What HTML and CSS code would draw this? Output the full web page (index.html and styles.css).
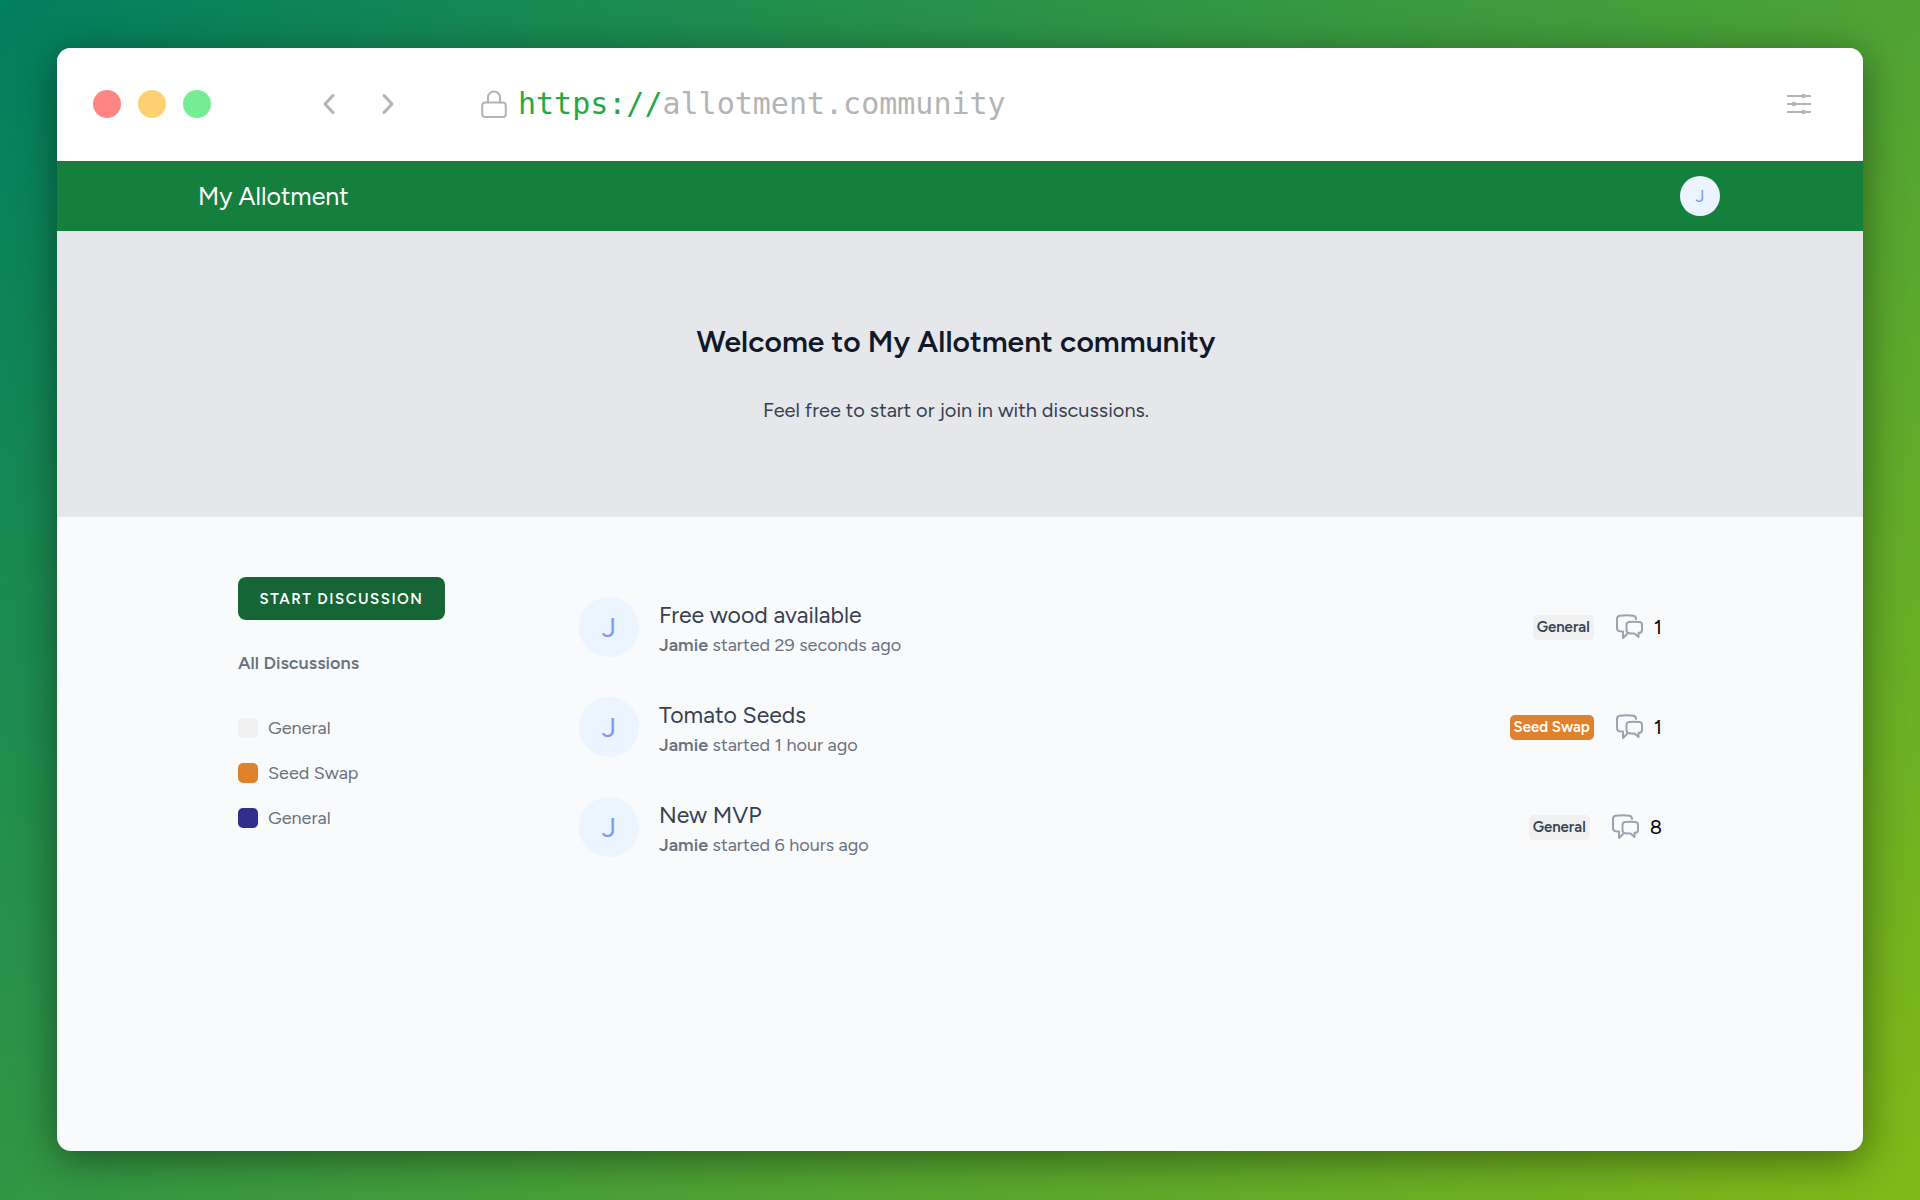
FILE: index.html
```html
<!DOCTYPE html>
<html lang="en">
<head>
<meta charset="utf-8">
<meta name="viewport" content="width=device-width, initial-scale=1">
<title>My Allotment</title>
<link rel="stylesheet" href="styles.css">
</head>
<body>
<svg class="defs" aria-hidden="true">
  <symbol id="chat" viewBox="0 0 27 26">
    <path d="M20 5Q20 2.200 17.500 1.700Q10.500 .6 3.500 1.700Q1 2.200 1 5V14Q1 16.800 3.500 17.200L7 17.600V24L11 20"/>
    <path d="M10.500 11Q10.500 8.300 13 8Q18 7.400 23.500 8Q26 8.300 26 11V16Q26 18.500 23.500 18.800H22.500V23L18.500 19.500Q15 19.500 13 19.200Q10.500 18.800 10.500 16Z"/>
  </symbol>
</svg>
<div class="window">
  <div class="toolbar">
    <div class="lights"><span class="light close"></span><span class="light minimise"></span><span class="light expand"></span></div>
    <div class="history">
      <button class="icon-button" aria-label="Back"><svg width="14" height="22" viewBox="0 0 14 22"><path d="M11 2.500L3 11l8 8.500"/></svg></button>
      <button class="icon-button" aria-label="Forward"><svg width="14" height="22" viewBox="0 0 14 22"><path d="M3 2.500L11 11l-8 8.500"/></svg></button>
    </div>
    <div class="address">
      <svg class="lock" width="26" height="28" viewBox="0 0 26 28"><rect x="1.200" y="12.500" width="23.600" height="14.500" rx="3"/><path d="M7 12.500V7.500a6 6 0 0 1 12 0v5"/></svg>
      <span class="url"><span class="scheme">https://</span>allotment.community</span>
    </div>
    <button class="icon-button" aria-label="Settings"><svg class="sliders" width="24" height="22" viewBox="0 0 24 22"><path d="M0 3h24M0 11h24M0 19h24"/><circle cx="16.500" cy="3" r="2.300"/><circle cx="7" cy="11" r="2.300"/><circle cx="16.500" cy="19" r="2.300"/></svg></button>
  </div>
  <header class="nav">
    <a class="brand" href="#">My Allotment</a>
    <button class="avatar avatar-small" aria-label="Jamie's account">J</button>
  </header>
  <section class="hero">
    <h1>Welcome to My Allotment community</h1>
    <p>Feel free to start or join in with discussions.</p>
  </section>
  <main class="content">
    <aside class="sidebar">
      <button class="start">START DISCUSSION</button>
      <a class="all" href="#">All Discussions</a>
      <nav class="topics">
        <a class="topic" href="#"><span class="swatch grey"></span>General</a>
        <a class="topic" href="#"><span class="swatch orange"></span>Seed Swap</a>
        <a class="topic" href="#"><span class="swatch indigo"></span>General</a>
      </nav>
    </aside>
    <div class="discussions">
      <article class="discussion">
        <span class="avatar">J</span>
        <div class="summary"><a class="title" href="#">Free wood available</a><p><b>Jamie</b> started 29 seconds ago</p></div>
        <span class="tag grey">General</span>
        <span class="replies"><svg width="27" height="26"><use href="#chat"/></svg>1</span>
      </article>
      <article class="discussion">
        <span class="avatar">J</span>
        <div class="summary"><a class="title" href="#">Tomato Seeds</a><p><b>Jamie</b> started 1 hour ago</p></div>
        <span class="tag orange">Seed Swap</span>
        <span class="replies"><svg width="27" height="26"><use href="#chat"/></svg>1</span>
      </article>
      <article class="discussion">
        <span class="avatar">J</span>
        <div class="summary"><a class="title" href="#">New MVP</a><p><b>Jamie</b> started 6 hours ago</p></div>
        <span class="tag grey">General</span>
        <span class="replies"><svg width="27" height="26"><use href="#chat"/></svg>8</span>
      </article>
    </div>
  </main>
</div>
</body>
</html>
```
FILE: styles.css
```css
* { box-sizing: border-box; margin: 0; }
body {
  display: flex;
  min-height: 100vh;
  padding: 48px 57px 49px;
  background: linear-gradient(135deg, #007f5f, #2b9348, #55a630, #80b918);
  font-family: Figtree, Lato, sans-serif;
  color: #6b7280;
}
a { color: inherit; text-decoration: none; }
button { padding: 0; border: 0; background: none; font: inherit; cursor: pointer; }
svg { display: block; fill: none; stroke-linecap: round; stroke-linejoin: round; }
b { font-weight: 600; }
.defs { position: absolute; width: 0; height: 0; }

.window {
  display: flex;
  flex: 1;
  flex-direction: column;
  overflow: hidden;
  border-radius: 14px;
  background: #f9fafc;
  box-shadow: 0 8px 40px rgba(0, 0, 0, .45);
}

.toolbar {
  display: flex;
  align-items: center;
  height: 113px;
  padding: 0 52px 1px 36px;
  background: #fff;
}
.lights { display: flex; gap: 17px; }
.light { width: 28px; height: 28px; border-radius: 50%; }
.close { background: #ff8585; }
.minimise { background: #ffd071; }
.expand { background: #74ed94; }
.history { display: flex; gap: 45px; margin-left: 111px; }
.icon-button svg { stroke: #b4b4b4; stroke-width: 3; }
.icon-button .sliders { stroke-width: 2; stroke-linecap: butt; }
.sliders circle { fill: #b4b4b4; stroke: none; }
.address { display: flex; flex: 1; align-items: center; gap: 11px; margin-left: 86px; }
.lock { stroke: #b4b4b4; stroke-width: 2; }
.url { color: #b4b4b4; font: 30px/40px "DejaVu Sans Mono", monospace; }
.scheme { color: #28a745; }

.nav {
  display: flex;
  align-items: center;
  justify-content: space-between;
  height: 70px;
  padding: 0 143px 0 141px;
  background: #15803d;
}
.brand { color: #fff; font-size: 25px; }
.avatar {
  display: flex;
  flex: none;
  align-items: center;
  justify-content: center;
  width: 60px;
  height: 60px;
  border-radius: 50%;
  background: #ebf4ff;
  color: #7f9cf5;
  font-size: 28px;
}
.avatar-small { width: 40px; height: 40px; font-size: 18px; }

.hero {
  display: flex;
  flex-direction: column;
  align-items: center;
  gap: 30px;
  padding: 91px 8px 88px 0;
  background: #e5e7eb;
  text-align: center;
}
.hero h1 { color: #111827; font-size: 30px; line-height: 40px; font-weight: 600; }
.hero p { color: #374151; font-size: 20px; line-height: 37px; }

.content { display: flex; gap: 134px; padding: 60px 201px 60px 181px; }
.sidebar { display: flex; flex: none; flex-direction: column; align-items: flex-start; width: 207px; }
.start {
  width: 100%;
  height: 43px;
  border-radius: 8px;
  background: #166534;
  color: #fff;
  font-size: 15px;
  font-weight: 600;
  letter-spacing: .1em;
}
.all { margin-top: 31px; font-size: 18px; line-height: 24px; font-weight: 600; }
.topics { display: grid; gap: 21px; margin-top: 41px; }
.topic { display: flex; align-items: center; gap: 10px; font-size: 18px; line-height: 24px; }
.swatch { width: 20px; height: 20px; border-radius: 5px; }
.grey { background: #f0f0f0; color: #374151; }
.orange { background: #e0812e; color: #fff; }
.indigo { background: #312e8b; }

.discussions { display: grid; flex: 1; gap: 34px; padding-top: 17px; }
.discussion { display: flex; align-items: center; }
.summary { flex: 1; margin-left: 20px; padding-top: 6px; }
.title { display: block; color: #374151; font-size: 23px; line-height: 30px; }
.summary p { font-size: 18px; line-height: 30px; }
.tag { padding: 0 4px; border-radius: 5px; font-size: 15px; line-height: 25px; font-weight: 600; }
.replies { display: flex; align-items: center; gap: 11px; margin-left: 22px; color: #000; font-size: 20px; }
.replies svg { stroke: #9ca3af; stroke-width: 2; }
```
